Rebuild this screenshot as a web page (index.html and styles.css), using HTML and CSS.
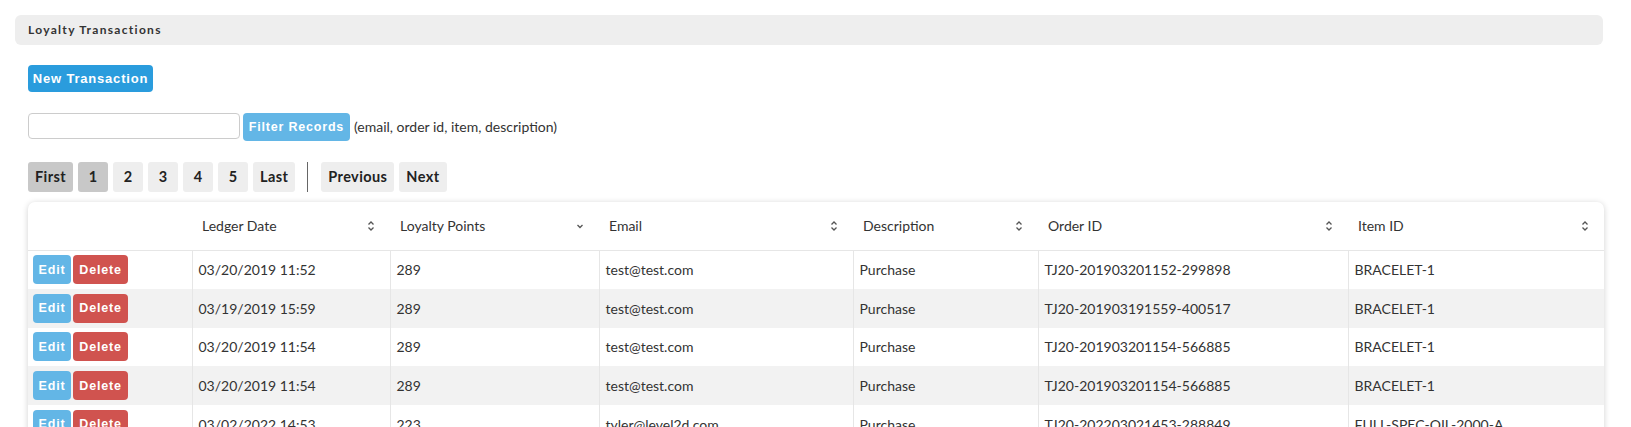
FILE: index.html
```html
<!DOCTYPE html>
<html lang="en">
  <head>
    <meta charset="UTF-8" />
    <title>Loyalty Transactions</title>
    <link rel="stylesheet" href="styles.css">
  </head>

  <body>
    <div class="panel-heading">Loyalty Transactions</div>

    <div class="content">
      <div class="actions">
        <button class="btn btn-primary">New Transaction</button>
      </div>

      <div class="filter">
        <input type="text" class="filter-input" />
        <button class="btn btn-info filter-btn">Filter Records</button>
        <span class="filter-hint">(email, order id, item, description)</span>
      </div>

      <div class="pager">
        <span class="page active">First</span>
        <span class="page active">1</span>
        <span class="page">2</span>
        <span class="page">3</span>
        <span class="page">4</span>
        <span class="page">5</span>
        <span class="page">Last</span>
        <span class="pager-sep"></span>
        <span class="page">Previous</span>
        <span class="page">Next</span>
      </div>

      <div class="card">
        <table class="grid">
          <colgroup>
            <col style="width: 164px">
            <col style="width: 198px">
            <col style="width: 209px">
            <col style="width: 254px">
            <col style="width: 185px">
            <col style="width: 310px">
            <col>
          </colgroup>
          <thead>
            <tr>
              <th></th>
              <th><span>Ledger Date</span><svg class="sort" viewBox="0 0 8 12"><path d="M1.5 4.5 L4 2 L6.5 4.5 M1.5 7.5 L4 10 L6.5 7.5" /></svg></th>
              <th><span>Loyalty Points</span><svg class="sort" viewBox="0 0 8 12"><path d="M1.5 5 L4 7.5 L6.5 5" /></svg></th>
              <th><span>Email</span><svg class="sort" viewBox="0 0 8 12"><path d="M1.5 4.5 L4 2 L6.5 4.5 M1.5 7.5 L4 10 L6.5 7.5" /></svg></th>
              <th><span>Description</span><svg class="sort" viewBox="0 0 8 12"><path d="M1.5 4.5 L4 2 L6.5 4.5 M1.5 7.5 L4 10 L6.5 7.5" /></svg></th>
              <th><span>Order ID</span><svg class="sort" viewBox="0 0 8 12"><path d="M1.5 4.5 L4 2 L6.5 4.5 M1.5 7.5 L4 10 L6.5 7.5" /></svg></th>
              <th><span>Item ID</span><svg class="sort" viewBox="0 0 8 12"><path d="M1.5 4.5 L4 2 L6.5 4.5 M1.5 7.5 L4 10 L6.5 7.5" /></svg></th>
            </tr>
          </thead>
          <tbody>
            <tr>
              <td class="ops"><button class="btn btn-info">Edit</button><button class="btn btn-danger">Delete</button></td>
              <td>03/20/2019 11:52</td>
              <td>289</td>
              <td>test@test.com</td>
              <td>Purchase</td>
              <td>TJ20-201903201152-299898</td>
              <td>BRACELET-1</td>
            </tr>
            <tr>
              <td class="ops"><button class="btn btn-info">Edit</button><button class="btn btn-danger">Delete</button></td>
              <td>03/19/2019 15:59</td>
              <td>289</td>
              <td>test@test.com</td>
              <td>Purchase</td>
              <td>TJ20-201903191559-400517</td>
              <td>BRACELET-1</td>
            </tr>
            <tr>
              <td class="ops"><button class="btn btn-info">Edit</button><button class="btn btn-danger">Delete</button></td>
              <td>03/20/2019 11:54</td>
              <td>289</td>
              <td>test@test.com</td>
              <td>Purchase</td>
              <td>TJ20-201903201154-566885</td>
              <td>BRACELET-1</td>
            </tr>
            <tr>
              <td class="ops"><button class="btn btn-info">Edit</button><button class="btn btn-danger">Delete</button></td>
              <td>03/20/2019 11:54</td>
              <td>289</td>
              <td>test@test.com</td>
              <td>Purchase</td>
              <td>TJ20-201903201154-566885</td>
              <td>BRACELET-1</td>
            </tr>
            <tr>
              <td class="ops"><button class="btn btn-info">Edit</button><button class="btn btn-danger">Delete</button></td>
              <td>03/02/2022 14:53</td>
              <td>223</td>
              <td>tyler@level2d.com</td>
              <td>Purchase</td>
              <td>TJ20-202203021453-288849</td>
              <td>FULL-SPEC-OIL-2000-A</td>
            </tr>
          </tbody>
        </table>
      </div>
    </div>
  </body>
</html>
```

FILE: styles.css
```css
* {
  padding: 0;
  margin: 0;
  box-sizing: border-box;
}

body {
  font-family: Lato, "Open Sans", sans-serif;
  font-size: 14px;
  color: #333;
  background: #fff;
  overflow: hidden;
}

.panel-heading {
  margin: 15px 28px 0 15px;
  height: 30px;
  line-height: 30px;
  padding: 0 13px;
  background: #eee;
  border-radius: 6px;
  font-weight: bold;
  font-size: 12px;
  letter-spacing: 1.3px;
  color: #333;
}

.content {
  padding: 20px 27px 0 28px;
}

.btn {
  border: 0;
  border-radius: 4px;
  color: #fff;
  font-family: "Liberation Sans", Arial, sans-serif;
  font-weight: bold;
  font-size: 12px;
  letter-spacing: 0.6px;
  cursor: pointer;
}

.btn-primary {
  background: #2a9cdd;
  height: 27px;
  width: 125px;
  font-size: 13px;
  letter-spacing: 0.8px;
}

.btn-info {
  background: #63b6e6;
}

.btn-danger {
  background: #d0534f;
}

.filter {
  display: flex;
  align-items: flex-start;
  margin-top: 21px;
}

.filter-input {
  width: 212px;
  height: 26px;
  border: 1px solid #ccc;
  border-radius: 4px;
}

.filter-btn {
  height: 28px;
  width: 107px;
  margin-left: 3px;
  font-size: 12.5px;
  letter-spacing: 0.8px;
}

.filter-hint {
  margin-left: 4px;
  line-height: 28px;
  font-size: 14px;
  color: #333;
}

.pager {
  display: flex;
  gap: 5px;
  margin-top: 21px;
  height: 30px;
}

.page {
  min-width: 30px;
  height: 30px;
  line-height: 30px;
  padding: 0 7px;
  text-align: center;
  background: #eee;
  border-radius: 3px;
  font-weight: bold;
  font-size: 14.5px;
  letter-spacing: 0.4px;
  color: #222;
}

.page.active {
  background: #c8c8c8;
}

.pager-sep {
  width: 1px;
  background: #666;
  margin: 0 8px 0 7px;
}

.card {
  margin-top: 10px;
  width: 1576px;
  background: #fff;
  border-radius: 7px;
  box-shadow: 0 1px 6px rgba(0, 0, 0, 0.18);
}

.grid {
  width: 100%;
  table-layout: fixed;
  border-collapse: collapse;
}

.grid th {
  height: 48px;
  padding: 0 12px 0 10px;
  text-align: left;
  font-weight: normal;
  font-size: 14px;
  color: #333;
  border-bottom: 1px solid #e6e6e6;
  position: relative;
}

.grid th .sort {
  position: absolute;
  right: 15px;
  top: 18px;
  width: 8px;
  height: 12px;
  fill: none;
  stroke: #555;
  stroke-width: 1.3;
}

.grid td {
  height: 38.75px;
  padding: 0 6px;
  border-left: 1px solid #e6e6e6;
  white-space: nowrap;
  overflow: hidden;
}

.grid td.ops {
  border-left: 0;
  padding: 0 5px;
}

.grid tbody tr:nth-child(even) td {
  background: #f2f2f2;
}

.ops .btn {
  height: 29px;
  vertical-align: middle;
  font-size: 12.5px;
  letter-spacing: 0.8px;
}

.ops .btn-info {
  width: 38px;
}

.ops .btn-danger {
  width: 55px;
  margin-left: 2px;
}
```
